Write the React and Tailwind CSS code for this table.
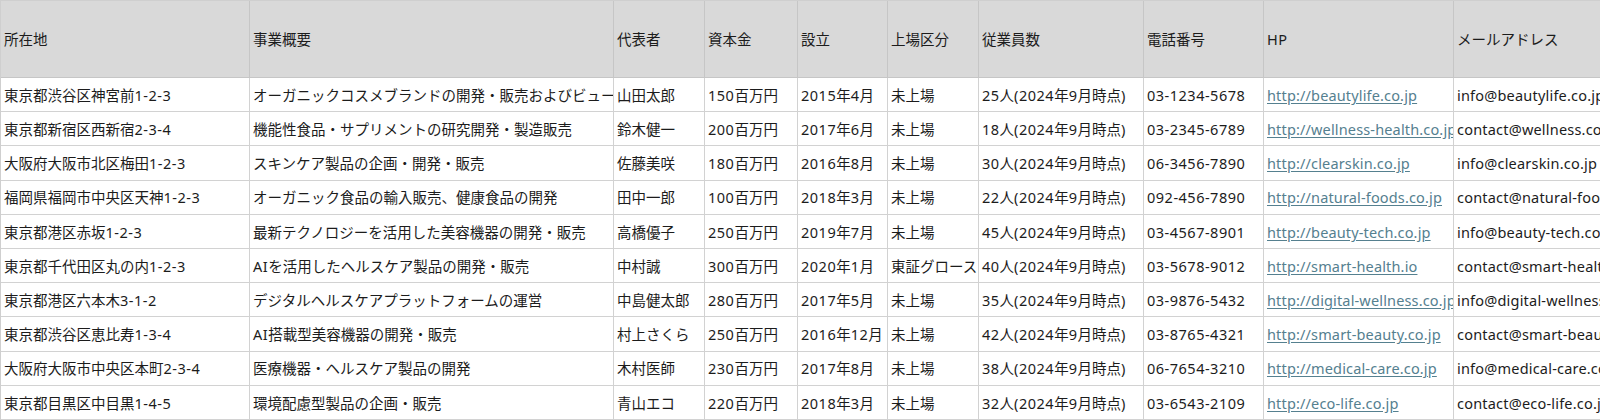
import React from "react";

const headers = ["所在地", "事業概要", "代表者", "資本金", "設立", "上場区分", "従業員数", "電話番号", "HP", "メールアドレス"];

const rows = [
  ["東京都渋谷区神宮前1-2-3", "オーガニックコスメブランドの開発・販売およびビューティーサロンの運営", "山田太郎", "150百万円", "2015年4月", "未上場", "25人(2024年9月時点)", "03-1234-5678", "http://beautylife.co.jp", "info@beautylife.co.jp"],
  ["東京都新宿区西新宿2-3-4", "機能性食品・サプリメントの研究開発・製造販売", "鈴木健一", "200百万円", "2017年6月", "未上場", "18人(2024年9月時点)", "03-2345-6789", "http://wellness-health.co.jp", "contact@wellness.co.jp"],
  ["大阪府大阪市北区梅田1-2-3", "スキンケア製品の企画・開発・販売", "佐藤美咲", "180百万円", "2016年8月", "未上場", "30人(2024年9月時点)", "06-3456-7890", "http://clearskin.co.jp", "info@clearskin.co.jp"],
  ["福岡県福岡市中央区天神1-2-3", "オーガニック食品の輸入販売、健康食品の開発", "田中一郎", "100百万円", "2018年3月", "未上場", "22人(2024年9月時点)", "092-456-7890", "http://natural-foods.co.jp", "contact@natural-foods.co.jp"],
  ["東京都港区赤坂1-2-3", "最新テクノロジーを活用した美容機器の開発・販売", "高橋優子", "250百万円", "2019年7月", "未上場", "45人(2024年9月時点)", "03-4567-8901", "http://beauty-tech.co.jp", "info@beauty-tech.co.jp"],
  ["東京都千代田区丸の内1-2-3", "AIを活用したヘルスケア製品の開発・販売", "中村誠", "300百万円", "2020年1月", "東証グロース", "40人(2024年9月時点)", "03-5678-9012", "http://smart-health.io", "contact@smart-health.io"],
  ["東京都港区六本木3-1-2", "デジタルヘルスケアプラットフォームの運営", "中島健太郎", "280百万円", "2017年5月", "未上場", "35人(2024年9月時点)", "03-9876-5432", "http://digital-wellness.co.jp", "info@digital-wellness.co.jp"],
  ["東京都渋谷区恵比寿1-3-4", "AI搭載型美容機器の開発・販売", "村上さくら", "250百万円", "2016年12月", "未上場", "42人(2024年9月時点)", "03-8765-4321", "http://smart-beauty.co.jp", "contact@smart-beauty.co.jp"],
  ["大阪府大阪市中央区本町2-3-4", "医療機器・ヘルスケア製品の開発", "木村医師", "230百万円", "2017年8月", "未上場", "38人(2024年9月時点)", "06-7654-3210", "http://medical-care.co.jp", "info@medical-care.co.jp"],
  ["東京都目黒区中目黒1-4-5", "環境配慮型製品の企画・販売", "青山エコ", "220百万円", "2018年3月", "未上場", "32人(2024年9月時点)", "03-6543-2109", "http://eco-life.co.jp", "contact@eco-life.co.jp"],
];

const gridCols = "grid grid-cols-[249px_364px_91px_93px_90px_91px_165px_120px_190px_220px]";

function Runs({ text }) {
  const parts = text.match(/[\x20-\x7e]+|[^\x20-\x7e]+/g) || [];
  return parts.map((p, i) =>
    /^[\x20-\x7e]+$/.test(p) ? (
      <span key={i} className="tracking-[0.5px]">
        {p}
      </span>
    ) : (
      <span key={i}>{p}</span>
    )
  );
}

export default function App() {
  return (
    <div
      className="w-[1600px] h-[420px] overflow-hidden bg-white text-[#1c1c1c] text-[14.5px]"
      style={{ fontFamily: '"Noto Sans", "Noto Sans CJK JP", sans-serif' }}
    >
      <div className="w-[1673px] border-t border-l border-[#cfcfcf]">
        <div className={`${gridCols} h-[77px] bg-[#d9d9d9]`}>
          {headers.map((h, i) => (
            <div
              key={i}
              className="flex items-center overflow-hidden whitespace-nowrap border-r border-b border-[#c6c6c6] pl-[3px] leading-none"
            >
              <Runs text={h} />
            </div>
          ))}
        </div>
        {rows.map((r, ri) => (
          <div key={ri} className={`${gridCols} h-[34.2px]`}>
            {r.map((c, ci) => (
              <div
                key={ci}
                className="flex items-center overflow-hidden whitespace-nowrap border-r border-b border-[#d2d2d2] pl-[3px] pt-[1px] leading-none"
              >
                {ci === 8 ? (
                  <span className="text-[#55808f] underline decoration-[#55808f] underline-offset-[2px] tracking-[0.15px]">{c}</span>
                ) : ci === 9 ? (
                  <span className="whitespace-nowrap tracking-[0.2px]">{c}</span>
                ) : (
                  <span className="whitespace-nowrap">
                    <Runs text={c} />
                  </span>
                )}
              </div>
            ))}
          </div>
        ))}
      </div>
    </div>
  );
}
